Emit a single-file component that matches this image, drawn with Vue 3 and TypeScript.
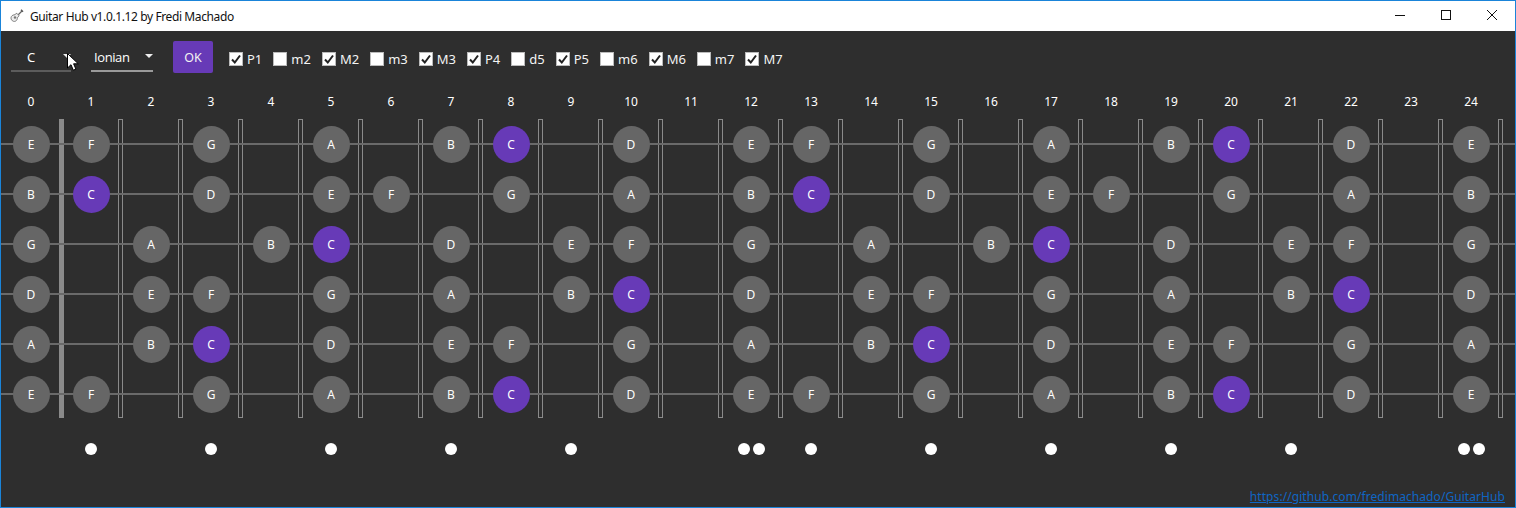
<script setup lang="ts">
const names: Record<number, string> = { 0: 'C', 2: 'D', 4: 'E', 5: 'F', 7: 'G', 9: 'A', 11: 'B' }
const tuning = [4, 11, 7, 2, 9, 4]
const frets = Array.from({ length: 25 }, (_, i) => i)

const intervals = [
  { label: 'P1', on: true },
  { label: 'm2', on: false },
  { label: 'M2', on: true },
  { label: 'm3', on: false },
  { label: 'M3', on: true },
  { label: 'P4', on: true },
  { label: 'd5', on: false },
  { label: 'P5', on: true },
  { label: 'm6', on: false },
  { label: 'M6', on: true },
  { label: 'm7', on: false },
  { label: 'M7', on: true },
]

// how many inlay dots sit under each fret
function dotCount(fret: number) {
  if (fret === 12 || fret === 24) return 2
  return [1, 3, 5, 7, 9, 13, 15, 17, 19, 21].includes(fret) ? 1 : 0
}

function noteAt(open: number, fret: number) {
  return names[(open + fret) % 12] ?? ''
}
</script>

<template>
  <div class="window">
    <header class="titlebar">
      <svg class="app-icon" viewBox="0 0 16 16" width="16" height="16">
        <path d="M9.500 7.500 14 3" stroke="#666" stroke-width="1.300" fill="none" />
        <path d="M13 1.800l2 2" stroke="#555" stroke-width="1.500" fill="none" />
        <path d="M8.800 5.300c-1 .2-1.600.8-1.900 1.500-1.300 0-2.800.5-3.500 1.700-.8 1.500-.3 3.200.9 4.200 1.300 1 3 1 4.100-.2.900-.9 1-1.900.9-2.900 1-.4 1.500-1.200 1.600-2.200z" fill="#ececec" stroke="#7c7c7c" />
        <circle cx="7" cy="9.500" r="1.200" fill="#777" />
      </svg>
      <span class="title">Guitar Hub v1.0.1.12 by Fredi Machado</span>
      <div class="win-buttons">
        <button class="win-btn">
          <svg viewBox="0 0 10 10" width="10" height="10"><path d="M0 5.500h10" stroke="#111" fill="none" /></svg>
        </button>
        <button class="win-btn">
          <svg viewBox="0 0 10 10" width="10" height="10"><rect x=".5" y=".5" width="9" height="9" stroke="#111" fill="none" /></svg>
        </button>
        <button class="win-btn">
          <svg viewBox="0 0 10 10" width="10" height="10"><path d="M0 0l10 10M10 0 0 10" stroke="#111" fill="none" /></svg>
        </button>
      </div>
    </header>

    <main class="content">
      <div class="toolbar">
        <div class="select select-root">
          <span>C</span>
          <i class="caret"></i>
          <svg class="cursor" viewBox="0 0 12 18" width="12" height="18">
            <path d="M.5.500v14.500l3.500-3.300 2.300 5.500 2.600-1.100-2.300-5.300h4.700z" fill="#fff" stroke="#000" />
          </svg>
        </div>
        <div class="select select-mode">
          <span>Ionian</span>
          <i class="caret"></i>
        </div>
        <button class="ok">OK</button>
        <div class="intervals">
          <label v-for="item in intervals" :key="item.label" class="check">
            <span class="box">
              <svg v-if="item.on" viewBox="0 0 12 12" width="12" height="12">
                <path d="M2 6.500 4.800 9.500 10 2.500" stroke="#222" stroke-width="2" fill="none" />
              </svg>
            </span>
            {{ item.label }}
          </label>
        </div>
      </div>

      <div class="fret-numbers">
        <span v-for="f in frets" :key="f">{{ f }}</span>
      </div>

      <div class="board">
        <div class="nut"></div>
        <div v-for="f in 24" :key="f" class="fret" :style="{ left: 117 + (f - 1) * 60 + 'px' }"></div>
        <div v-for="(open, s) in tuning" :key="s" class="string">
          <div v-for="f in frets" :key="f" class="cell">
            <span
              v-if="noteAt(open, f)"
              class="note"
              :class="{ root: noteAt(open, f) === 'C' }"
            >{{ noteAt(open, f) }}</span>
          </div>
        </div>
      </div>

      <div class="inlays">
        <div v-for="f in frets" :key="f" class="inlay">
          <i v-for="d in dotCount(f)" :key="d" class="dot"></i>
        </div>
      </div>

      <a class="repo" href="#">https://github.com/fredimachado/GuitarHub</a>
    </main>
  </div>
</template>

<style>
html,
body {
  margin: 0;
  background: #2e2e2e;
  overflow: hidden;
}
</style>

<style scoped>
.window {
  box-sizing: border-box;
  width: 1516px;
  height: 508px;
  border: 1px solid #1a84d9;
  display: flex;
  flex-direction: column;
  font-family: "Noto Sans", "Open Sans", sans-serif;
  font-size: 12px;
  color: #fff;
}

.titlebar {
  height: 30px;
  flex: none;
  background: #fff;
  color: #111;
  display: flex;
  align-items: center;
  padding-left: 7px;
}

.app-icon {
  margin-right: 6px;
}

.title {
  font-size: 12px;
  letter-spacing: -0.39px;
}

.win-buttons {
  margin-left: auto;
  align-self: flex-start;
  display: flex;
}

.win-btn {
  width: 46px;
  height: 28px;
  padding: 0;
  border: 0;
  background: none;
  display: flex;
  align-items: center;
  justify-content: center;
}

.content {
  flex: 1;
  position: relative;
  background: #2e2e2e;
  display: flex;
  flex-direction: column;
}

.toolbar {
  height: 42px;
  margin-top: 10px;
  padding-left: 10px;
  display: flex;
  align-items: flex-start;
}

.select {
  position: relative;
  box-sizing: border-box;
  height: 30px;
  margin-top: 1px;
  padding-top: 2px;
  border-bottom: 2px solid #9a9a9a;
  display: flex;
  align-items: center;
  justify-content: space-between;
  font-size: 13px;
}

.select-root {
  width: 60px;
  margin-right: 20px;
  padding-left: 16px;
  border-bottom-color: #5c5c5c;
}

.select-mode {
  width: 62px;
  margin-right: 20px;
  padding-left: 3px;
  font-family: "Open Sans", sans-serif;
  letter-spacing: -0.4px;
}

.caret {
  width: 0;
  height: 0;
  margin-top: -2px;
  border: 4px solid transparent;
  border-top: 4px solid #eee;
  border-bottom: 0;
}

.cursor {
  position: absolute;
  left: 56px;
  top: 11px;
}

.ok {
  width: 40px;
  height: 32px;
  padding: 0;
  border: 0;
  border-radius: 2px;
  background: #673ab7;
  color: #f2f2f2;
  font: inherit;
  font-size: 12.5px;
}

.intervals {
  display: flex;
  margin-left: 16px;
  height: 32px;
  align-items: center;
  margin-top: 2px;
}

.check {
  display: flex;
  align-items: center;
  margin-right: 11px;
  font-size: 13px;
  color: #f4f4f4;
}

.box {
  box-sizing: border-box;
  width: 14px;
  height: 14px;
  margin-right: 4px;
  border: 1px solid #bbb;
  background: #fff;
  display: flex;
  align-items: center;
  justify-content: center;
}

.fret-numbers,
.string,
.inlays {
  display: grid;
  grid-template-columns: repeat(25, 60px);
}

.fret-numbers {
  height: 20px;
  margin-top: 9px;
  text-align: center;
  line-height: 20px;
}

.board {
  position: relative;
  margin-top: 7px;
  height: 300px;
}

.string {
  position: relative;
  height: 50px;
  align-items: center;
  background: linear-gradient(#6a6a6a, #6a6a6a) center / 100% 2px no-repeat;
}

.cell {
  display: flex;
  justify-content: center;
}

.note {
  position: relative;
  z-index: 1;
  width: 37px;
  height: 37px;
  border-radius: 50%;
  background: #666;
  color: #fff;
  display: flex;
  align-items: center;
  justify-content: center;
}

.note.root {
  background: #673ab7;
}

.nut {
  position: absolute;
  left: 58px;
  top: 0;
  width: 5px;
  height: 299px;
  background: #8a8a8a;
}

.fret {
  position: absolute;
  top: 0;
  box-sizing: border-box;
  width: 5px;
  height: 299px;
  border: 1px solid #8a8a8a;
}

.inlays {
  margin-top: 24px;
  height: 12px;
}

.inlay {
  display: flex;
  justify-content: center;
  gap: 3px;
}

.dot {
  width: 12px;
  height: 12px;
  border-radius: 50%;
  background: #fff;
}

.repo {
  position: absolute;
  right: 10px;
  bottom: 2px;
  color: #0f66c4;
  font-size: 12px;
  letter-spacing: 0.07px;
}
</style>
